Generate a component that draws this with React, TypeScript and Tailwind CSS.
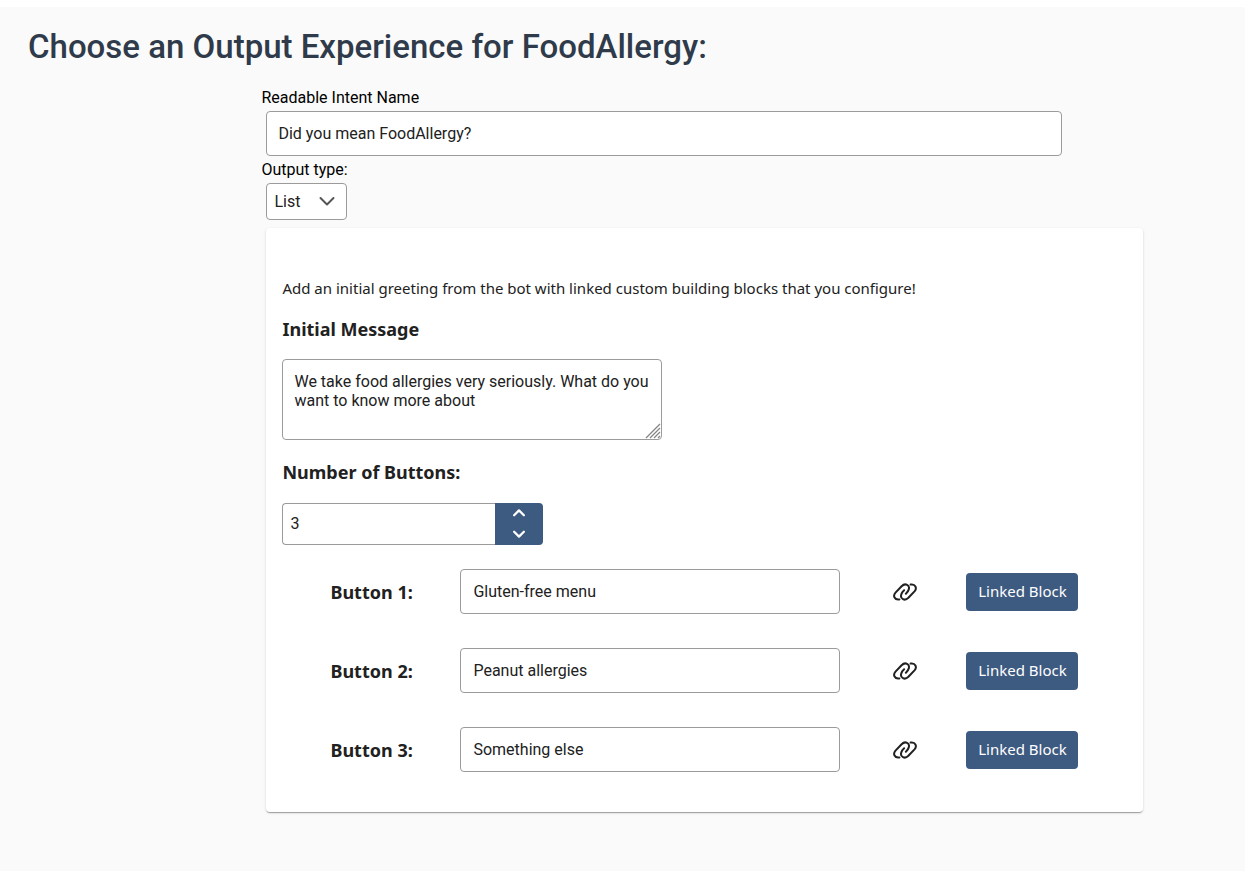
import { useState } from "react";

type ChevronProps = { direction: "up" | "down"; className?: string; strokeWidth?: number };

function Chevron({ direction, className, strokeWidth = 2 }: ChevronProps) {
  return (
    <svg
      viewBox="0 0 16 16"
      fill="none"
      stroke="currentColor"
      strokeWidth={strokeWidth}
      strokeLinecap="round"
      strokeLinejoin="round"
      className={className}
      aria-hidden="true"
    >
      <path d={direction === "up" ? "M1.5 11 8 4.5 14.5 11" : "M1.5 5 8 11.5 14.5 5"} />
    </svg>
  );
}

function LinkIcon({ className }: { className?: string }) {
  return (
    <svg
      viewBox="0 0 24 18"
      fill="none"
      stroke="currentColor"
      strokeWidth="2"
      strokeLinecap="round"
      className={className}
      aria-hidden="true"
    >
      <path d="M6.4 16.4C1.6 17.2-.4 12.9 2.5 9.6L8.6 3.2C12.2-.4 17.2 2 15.7 6.6 15.2 8.2 14.2 9.5 12.9 10.7" />
      <path d="M17.6 1.6C22.4.8 24.4 5.1 21.5 8.4L15.4 14.8C11.8 18.4 6.8 16 8.3 11.4 8.8 9.8 9.8 8.5 11.1 7.3" />
    </svg>
  );
}

const fieldClass =
  "rounded-[4px] border border-[#9b9b9b] bg-white text-base text-[#212121] outline-none focus:border-[#3d5a80]";

export default function App() {
  const [intentName, setIntentName] = useState("Did you mean FoodAllergy?");
  const [outputType, setOutputType] = useState("List");
  const [message, setMessage] = useState(
    "We take food allergies very seriously. What do you want to know more about"
  );
  const [buttons, setButtons] = useState(["Gluten-free menu", "Peanut allergies", "Something else"]);

  const setCount = (count: number) => {
    const next = Math.max(1, Math.min(10, count || 1));
    setButtons((prev) => Array.from({ length: next }, (_, i) => prev[i] ?? ""));
  };

  return (
    <div className="min-h-screen bg-white pt-[7px] font-['Roboto',sans-serif] text-base">
      <main className="min-h-[calc(100vh-7px)] bg-[#fafafa] pb-14">
        <h1 className="px-7 pt-5 text-[33px] leading-10 font-medium text-[#2f3b4a]">
          Choose an Output Experience for FoodAllergy:
        </h1>

        <div className="mt-[19px] pr-[8.2%] pl-[21%]">
          <label htmlFor="intent" className="block leading-6 text-black">
            Readable Intent Name
          </label>
          <div className="mt-[1px] pl-[5px]">
            <input
              id="intent"
              value={intentName}
              onChange={(e) => setIntentName(e.target.value)}
              className={`${fieldClass} block h-[45px] w-full max-w-[796px] px-[11px]`}
            />
          </div>

          <label htmlFor="type" className="mt-[2px] block leading-6 text-black">
            Output type:
          </label>
          <div className="pl-[5px]">
            <div className="relative mt-[1px] w-[81px]">
              <select
                id="type"
                value={outputType}
                onChange={(e) => setOutputType(e.target.value)}
                className={`${fieldClass} block h-[37px] w-full appearance-none pl-[7px]`}
              >
                <option>List</option>
                <option>Text</option>
              </select>
              <Chevron
                direction="down"
                className="pointer-events-none absolute top-[10px] right-3 size-4 text-[#555555]"
              />
            </div>

            <section className="mt-2 rounded-[4px] bg-white px-4 pt-12 pb-10 font-['Noto_Sans','Open_Sans',sans-serif] text-[#212121] shadow-[0_2px_1px_-1px_rgba(0,0,0,0.2),0_1px_1px_0_rgba(0,0,0,0.14),0_1px_3px_0_rgba(0,0,0,0.12)]">
              <p className="text-[15px] leading-6">
                Add an initial greeting from the bot with linked custom building blocks that you configure!
              </p>

              <h3 className="mt-[17px] text-lg leading-6 font-bold">
                <label htmlFor="message">Initial Message</label>
              </h3>
              <div className="relative mt-[18px] w-[380px]">
                <textarea
                  id="message"
                  value={message}
                  onChange={(e) => setMessage(e.target.value)}
                  className={`${fieldClass} block h-[81px] w-full resize-none px-[11px] py-3 font-['Roboto',sans-serif] leading-[19px]`}
                />
                <svg
                  viewBox="0 0 16 16"
                  className="pointer-events-none absolute right-[1px] bottom-[1px] size-4 text-[#858585]"
                  stroke="currentColor"
                  strokeWidth="1.3"
                  aria-hidden="true"
                >
                  <path d="M1 15 15 1M5 15 15 5M9 15 15 9M13 15 15 13" />
                </svg>
              </div>

              <h3 className="mt-5 text-lg leading-6 font-bold">
                <label htmlFor="count">Number of Buttons:</label>
              </h3>
              <div className="mt-[19px] flex h-[42px] w-[261px]">
                <input
                  id="count"
                  inputMode="numeric"
                  value={buttons.length}
                  onChange={(e) => setCount(Number(e.target.value))}
                  className={`${fieldClass} min-w-0 flex-1 rounded-r-none border-r-0 px-[7px] font-['Roboto',sans-serif]`}
                />
                <div className="flex w-12 flex-col overflow-hidden rounded-r-[4px] bg-[#3d5a80] text-white">
                  <button
                    type="button"
                    aria-label="Increase"
                    onClick={() => setCount(buttons.length + 1)}
                    className="flex flex-1 items-center justify-center pb-[2px] hover:bg-[#34506f]"
                  >
                    <Chevron direction="up" strokeWidth={3} className="size-3" />
                  </button>
                  <button
                    type="button"
                    aria-label="Decrease"
                    onClick={() => setCount(buttons.length - 1)}
                    className="flex flex-1 items-center justify-center pb-[2px] hover:bg-[#34506f]"
                  >
                    <Chevron direction="down" strokeWidth={3} className="size-3" />
                  </button>
                </div>
              </div>

              <div className="mt-6 flex flex-col gap-[34px] pl-12">
                {buttons.map((text, i) => (
                  <div key={i} className="grid grid-cols-[130px_380px_126px_auto] items-center justify-start">
                    <label htmlFor={`button-${i}`} className="text-lg leading-6 font-bold">
                      Button {i + 1}:
                    </label>
                    <input
                      id={`button-${i}`}
                      value={text}
                      onChange={(e) =>
                        setButtons((prev) => prev.map((t, j) => (j === i ? e.target.value : t)))
                      }
                      className={`${fieldClass} h-[45px] w-full px-3 font-['Roboto',sans-serif]`}
                    />
                    <LinkIcon className="ml-1 h-[18px] w-6 justify-self-center" />
                    <button
                      type="button"
                      className="h-[38px] w-28 rounded-[4px] bg-[#3d5a80] text-[15px] whitespace-nowrap text-white hover:bg-[#34506f]"
                    >
                      Linked Block
                    </button>
                  </div>
                ))}
              </div>
            </section>
          </div>
        </div>
      </main>
    </div>
  );
}
